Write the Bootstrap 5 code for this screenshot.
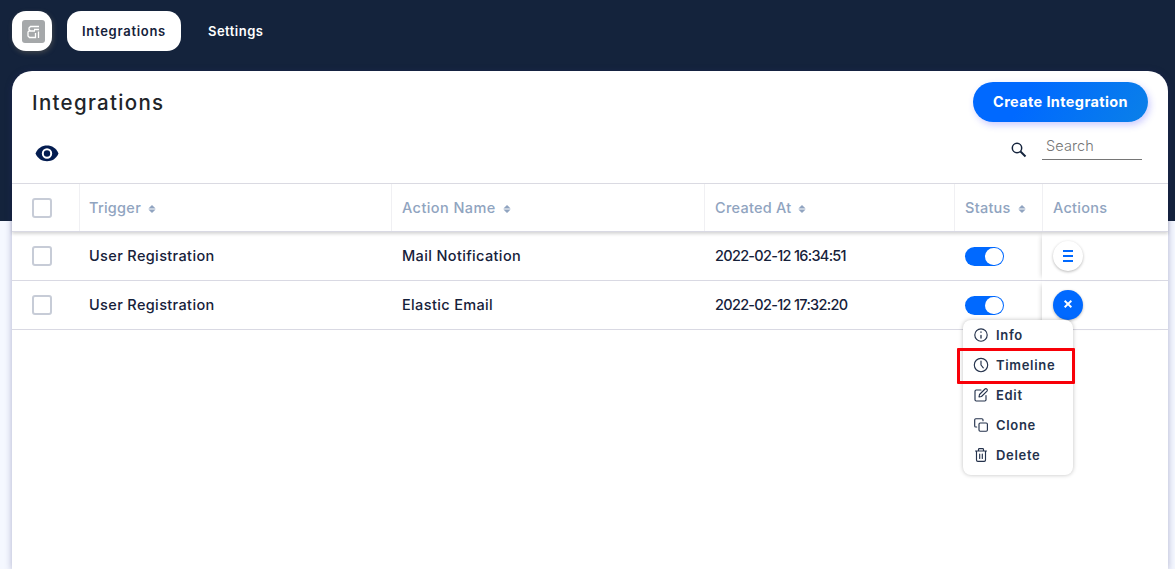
<!DOCTYPE html>
<html lang="en">
<head>
<meta charset="utf-8">
<meta name="viewport" content="width=device-width, initial-scale=1">
<title>Integrations</title>
<link href="https://cdn.jsdelivr.net/npm/bootstrap@5.3.0/dist/css/bootstrap.min.css" rel="stylesheet">
<style>
  body { font-family: Inter, "Open Sans", sans-serif; background: linear-gradient(#14233c 221px, #f5f8ff 221px); height: 100vh; overflow: hidden; color: #16213a; font-size: 14px; }
  .topbar { height: 71px; padding: 11px 12px 0; gap: 15px; }
  .brand { width: 40px; height: 40px; border-radius: 14px; background: #fff; box-shadow: 1px 2px 5px rgba(130,120,100,.4); }
  .tab { height: 40px; border-radius: 14px; font-size: 13px; font-weight: 600; color: #fff; letter-spacing: .48px; padding-top: 1px; }
  .tab.active { background: #fff; color: #14213a; width: 114px; letter-spacing: .72px; }
  .tab.other { margin-left: 12px; }
  .panel { margin: 0 7px 0 12px; height: calc(100vh - 71px); background: #fff; border-radius: 20px 20px 0 0; box-shadow: 0 1px 7px rgba(40,40,110,.35); }
  .panel-head { height: 62px; padding: 0 20px; }
  .panel-head h1 { font-size: 20.5px; font-weight: 500; letter-spacing: 1.3px; color: #212529; padding-top: 2px; }
  .create { width: 175px; height: 40px; border-radius: 20px; background: linear-gradient(120deg, #0069ff 30%, #0a80e8); color: #fff; font-size: 14.5px; font-weight: 700; letter-spacing: .38px; border: 0; box-shadow: 2px 3px 7px rgba(70,70,255,.28); padding: 0; }
  .tools { height: 50px; padding: 0 26px 0 23px; }
  .eye { margin-top: 7px; }
  .lens { margin: 9px 15px 0 0; }
  .find { width: 100px; height: 27px; border: 0; border-bottom: 1px solid #767676; padding: 0 4px 2px; font-size: 14.5px; letter-spacing: .1px; font-weight: 300; outline: 0; }
  .find::placeholder { color: #757575; opacity: 1; }
  .grid { table-layout: fixed; margin: 0; border-collapse: separate; border-spacing: 0; border-top: 1px solid #dcdce4; --bs-table-bg: transparent; }
  .grid th, .grid td { height: 49px; padding: 0 10px; vertical-align: middle; border-bottom: 1px solid #d9d9e3; font-size: 14.5px; font-weight: 500; color: #16213a; white-space: nowrap; }
  .grid th { height: 48px; color: #90a4c0; box-shadow: inset 1px 0 #f0f0f3; }
  .grid th:first-child { box-shadow: none; }
  .grid th + th, .grid td + td { padding-left: 11px; }
  .grid th:nth-child(2), .grid td:nth-child(2) { padding-left: 10px; }
  .grid thead { box-shadow: 0 2px 3px rgba(0,0,0,.16); }
  .grid td.act { box-shadow: -4px 0 5px -4px rgba(0,0,0,.22); }
  .grid th:first-child, .grid td:first-child { padding-left: 20px; }
  .sort { margin-left: 3px; }
  .tick { width: 20px; height: 20px; border: 2px solid #c7ccd7; border-radius: 3px; }
  .toggle { width: 39px; height: 19px; border-radius: 10px; background: #0069ff; padding: 1px; }
  .toggle::after { content: ""; width: 18px; height: 17px; border-radius: 9px; background: #fff; margin-left: auto; }
  .round { width: 30px; height: 30px; border-radius: 50%; background: #fff; border: 0; padding: 0; box-shadow: 0 1px 3px rgba(0,0,0,.28); }
  .round.open { background: #0069ff; }
  .round.open svg { margin-bottom: 2px; }
  .drop { position: absolute; left: -90px; top: 30px; width: 110px; height: 155px; background: #fff; border-radius: 8px; box-shadow: 0 0 4px rgba(0,0,0,.25); z-index: 2; }
  .entry { height: 30px; padding-left: 11px; gap: 8px; font-size: 13px; font-weight: 600; letter-spacing: .68px; color: #24324c; }
  .entry span { padding-top: 2px; }
  .entry svg { width: 14px; height: 14px; fill: none; stroke: #24324c; stroke-width: 1.15; stroke-linecap: round; stroke-linejoin: round; flex: none; overflow: visible; }
  .picked::after { content: ""; position: absolute; left: -6px; top: 28px; width: 118px; height: 36px; border: 3px solid #f80008; border-radius: 1px; }
  .w1 { letter-spacing: .26px; } .w2 { letter-spacing: .36px; } .w3 { letter-spacing: -.7px; } .w4 { letter-spacing: .42px; }
</style>
</head>
<body>
<nav class="topbar d-flex">
  <a class="brand d-flex align-items-center justify-content-center" href="#" aria-label="Home">
    <svg style="margin-left:2px" width="23" height="23" viewBox="0 0 23 23"><rect width="23" height="23" rx="3" fill="#a5a8aa"/><path d="M17 6.500H8.500L7 8v1.500l1.500 1.500H13M8.500 11H7L6 12v4l1.500 1.500h6V13M12 9.500h5M16.500 11.500V18" fill="none" stroke="#fff" stroke-width="1.300"/></svg>
  </a>
  <a class="tab active d-flex align-items-center justify-content-center text-decoration-none" href="#">Integrations</a>
  <a class="tab other d-flex align-items-center text-decoration-none" href="#">Settings</a>
</nav>
<main class="panel">
  <div class="panel-head d-flex align-items-center justify-content-between">
    <h1 class="mb-0">Integrations</h1>
    <button class="create">Create Integration</button>
  </div>
  <div class="tools d-flex justify-content-between">
    <svg class="eye" width="24" height="28" viewBox="0 0 24 28"><path d="M.5 13.500C3 8 7 5.600 12 5.600S21 8 23.500 13.500C21 19 17 21.200 12 21.200S3 19 .5 13.500Z" fill="#031c50"/><circle cx="12" cy="13.500" r="4.200" fill="none" stroke="#fff" stroke-width="2"/></svg>
    <div class="d-flex">
      <svg class="lens" width="16" height="16" viewBox="0 0 16 16" fill="none" stroke="#14233c"><circle cx="6" cy="6" r="4.700" stroke-width="1.500"/><path d="M9.500 9.500l5 5" stroke-width="2"/></svg>
      <input class="find" placeholder="Search" aria-label="Search">
    </div>
  </div>
  <table class="table grid">
    <colgroup><col style="width:67px"><col style="width:312px"><col style="width:313px"><col style="width:250px"><col style="width:88px"><col></colgroup>
    <thead><tr>
      <th><div class="tick"></div></th>
      <th><span class="w1">Trigger</span> <svg class="sort" width="8" height="8" viewBox="0 0 8 8" fill="#90a4c0"><path d="M.4 3.400L4 0l3.600 3.400zM.4 4.600h7.200L4 8z"/></svg></th>
      <th><span class="w4">Action Name</span> <svg class="sort" width="8" height="8" viewBox="0 0 8 8" fill="#90a4c0"><path d="M.4 3.400L4 0l3.600 3.400zM.4 4.600h7.200L4 8z"/></svg></th>
      <th><span class="w1">Created At</span> <svg class="sort" width="8" height="8" viewBox="0 0 8 8" fill="#90a4c0"><path d="M.4 3.400L4 0l3.600 3.400zM.4 4.600h7.200L4 8z"/></svg></th>
      <th><span class="w1">Status</span> <svg class="sort" width="8" height="8" viewBox="0 0 8 8" fill="#90a4c0"><path d="M.4 3.400L4 0l3.600 3.400zM.4 4.600h7.200L4 8z"/></svg></th>
      <th><span class="w1">Actions</span></th>
    </tr></thead>
    <tbody>
      <tr>
        <td><div class="tick"></div></td>
        <td class="w2">User Registration</td><td class="w2">Mail Notification</td><td class="w3">2022-02-12 16:34:51</td>
        <td><div class="toggle d-flex"></div></td>
        <td class="act"><button class="round d-flex align-items-center justify-content-center" aria-label="Menu"><svg width="10" height="12" viewBox="0 0 10 12" stroke="#0069ff" stroke-width="2"><path d="M0 1h10M0 6h10M0 11h10"/></svg></button></td>
      </tr>
      <tr>
        <td><div class="tick"></div></td>
        <td class="w2">User Registration</td><td class="w2">Elastic Email</td><td class="w3">2022-02-12 17:32:20</td>
        <td><div class="toggle d-flex"></div></td>
        <td class="act">
          <div class="position-relative">
            <button class="round open d-flex align-items-center justify-content-center" aria-label="Close"><svg width="8" height="8" viewBox="0 0 8 8" stroke="#fff" stroke-width="2"><path d="M.6.8l6.800 6.400M7.400.8L.6 7.200"/></svg></button>
            <div class="drop">
              <div class="entry d-flex align-items-center"><svg viewBox="0 0 14 14"><circle cx="7" cy="7" r="6.200"/><path d="M7 4v.3M7 7.500v2.500" stroke-width="1.300"/></svg><span>Info</span></div>
              <div class="entry picked d-flex align-items-center"><svg viewBox="0 0 14 14"><circle cx="7" cy="7" r="6.700"/><path d="M7 3v4l2.300 2.800"/></svg><span>Timeline</span></div>
              <div class="entry d-flex align-items-center"><svg viewBox="0 0 14 14"><path d="M7 2H2.200Q1 2 1 3.200v8.600Q1 13 2.200 13h8.600q1.200 0 1.200-1.200V7.500M5 9l.5-2.500L11 1q1-.7 1.900.2t.1 1.900L7.500 8.500z"/></svg><span>Edit</span></div>
              <div class="entry d-flex align-items-center"><svg viewBox="0 0 14 14"><rect x="5" y="5" width="8.400" height="8.200" rx="1.200"/><path d="M2.700 9h-.9Q.7 9 .7 7.900V1.800Q.7.7 1.800.7h6Q9 .7 9 1.800v.9"/></svg><span>Clone</span></div>
              <div class="entry d-flex align-items-center"><svg viewBox="0 0 14 14"><path d="M1.500 3h11M4.500 3V1.500Q4.500.6 5.400.6h3.200q.9 0 .9.900V3M2.500 3v9q0 1.400 1.300 1.400h6.400q1.300 0 1.300-1.400V3M5.700 6v4.500M8.300 6v4.500"/></svg><span>Delete</span></div>
            </div>
          </div>
        </td>
      </tr>
    </tbody>
  </table>
</main>
<script src="https://cdn.jsdelivr.net/npm/bootstrap@5.3.0/dist/js/bootstrap.bundle.min.js"></script>
</body>
</html>
